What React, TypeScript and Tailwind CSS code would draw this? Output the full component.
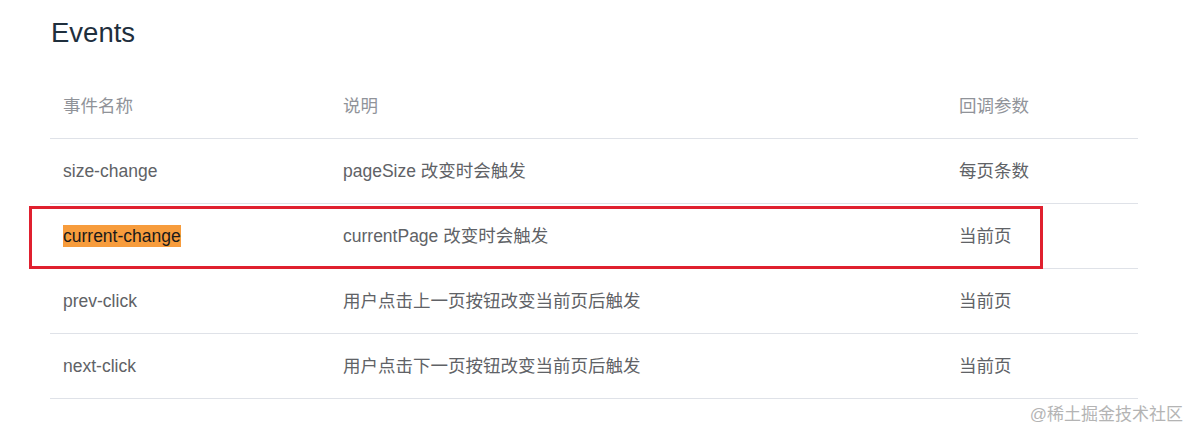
const rows = [
  { name: 'size-change', desc: 'pageSize 改变时会触发', args: '每页条数' },
  { name: 'current-change', desc: 'currentPage 改变时会触发', args: '当前页', marked: true },
  { name: 'prev-click', desc: '用户点击上一页按钮改变当前页后触发', args: '当前页' },
  { name: 'next-click', desc: '用户点击下一页按钮改变当前页后触发', args: '当前页' },
];

const font = { fontFamily: '"Liberation Sans", Arial, "Noto Sans CJK SC", sans-serif' };

export default function App() {
  return (
    <div className="relative w-[1198px] h-[443px] bg-white overflow-hidden" style={font}>
      <div className="pl-[50px] pt-[17px]">
        <h2 className="text-[27.5px] leading-[32px] text-[#1f2f3d] pl-[1px]">Events</h2>

        <div className="mt-[25px] w-[1088px] text-[17.5px]">
          {/* header */}
          <div className="flex h-[65px] items-center border-b border-[#dfe2e8] text-[#909399]">
            <div className="w-[280px] pl-[13px]">事件名称</div>
            <div className="w-[616px] pl-[13px]">说明</div>
            <div className="flex-1 pl-[13px]">回调参数</div>
          </div>

          {rows.map((row) => (
            <div key={row.name} className="relative flex h-[65px] items-center border-b border-[#dfe2e8] text-[#606266]">
              <div className="w-[280px] pl-[13px]">
                {row.marked ? (
                  <span className="bg-[#f79c3c] text-[#1a1a1a] py-[1px]">{row.name}</span>
                ) : (
                  row.name
                )}
              </div>
              <div className="w-[616px] pl-[13px]">{row.desc}</div>
              <div className="flex-1 pl-[13px]">{row.args}</div>
              {row.marked && (
                <div className="absolute left-[-21px] top-[2px] w-[1014px] h-[63px] border-[3px] border-[#e0202f]" />
              )}
            </div>
          ))}
        </div>
      </div>

      <div className="absolute right-[15px] top-[402px] text-[17px] text-[#b4b4b4]">@稀土掘金技术社区</div>
    </div>
  );
}
